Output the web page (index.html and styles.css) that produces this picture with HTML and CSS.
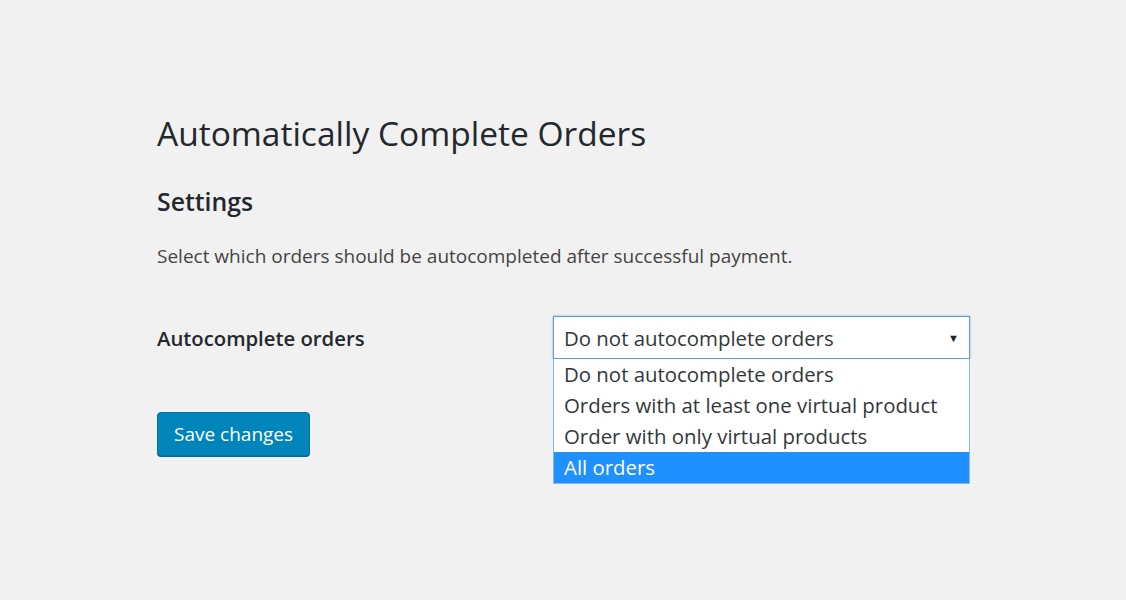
FILE: index.html
```html
<!DOCTYPE html>
<html lang="en">
    <head>
        <meta charset="UTF-8" />
        <title>Automatically Complete Orders</title>
        <link rel="stylesheet" href="styles.css">
    </head>
    <body>
        <div id="wrap">
            <h1>Automatically Complete Orders</h1>
            <h2>Settings</h2>
            <p class="desc">Select which orders should be autocompleted after successful payment.</p>
            <div class="form-row">
                <div class="form-label">Autocomplete orders</div>
                <div class="select-box">
                    <div class="select-current">
                        <span>Do not autocomplete orders</span>
                        <span class="arrow">&#9660;</span>
                    </div>
                    <ul class="select-list">
                        <li>Do not autocomplete orders</li>
                        <li>Orders with at least one virtual product</li>
                        <li>Order with only virtual products</li>
                        <li class="active">All orders</li>
                    </ul>
                </div>
            </div>
            <button id="save">Save changes</button>
        </div>
    </body>
</html>
```

FILE: styles.css
```css
body {
    margin: 0;
    background-color: #f1f1f1;
    font-family: "Open Sans", "Noto Sans", sans-serif;
    color: #23282d;
}
#wrap {
    box-sizing: border-box;
    min-height: 600px;
    padding: 107px 0 0 157px;
}
h1 {
    margin: 0;
    font-size: 33.5px;
    font-weight: 400;
    line-height: 52px;
}
h2 {
    margin: 26px 0 0 0;
    font-size: 24.8px;
    font-weight: 600;
    line-height: 32px;
}
.desc {
    margin: 27px 0 0 0;
    font-size: 19px;
    line-height: 24px;
    color: #444;
}
.form-row {
    display: flex;
    align-items: center;
    margin-top: 48px;
}
.form-label {
    width: 396px;
    font-size: 20.3px;
    font-weight: 600;
}
.select-box {
    position: relative;
    width: 417px;
}
.select-current {
    display: flex;
    justify-content: space-between;
    align-items: center;
    height: 41px;
    padding: 0 10px;
    background-color: #fff;
    border: 1px solid #5b9dd9;
    box-shadow: 0 0 2px rgba(30, 140, 190, 0.6);
    font-size: 20.4px;
    color: #32373c;
}
.arrow {
    font-size: 11px;
    color: #222;
}
.select-list {
    position: absolute;
    top: 42px;
    left: 0;
    right: 0;
    margin: 0;
    padding: 0;
    list-style: none;
    background-color: #fff;
    border: 1px solid #8fb6de;
    border-top-color: #5b9dd9;
    font-size: 20.4px;
    color: #32373c;
}
.select-list li {
    height: 31px;
    line-height: 30px;
    padding: 0 10px;
}
.select-list li.active {
    background-color: #1e90ff;
    color: #fff;
}
#save {
    margin-top: 53px;
    padding: 0 16px;
    height: 44px;
    font-family: inherit;
    font-size: 19px;
    color: #fff;
    background-color: #0085ba;
    border: 1px solid #0073aa;
    border-radius: 4px;
    box-shadow: 0 1px 0 #006799;
    cursor: pointer;
}
```
